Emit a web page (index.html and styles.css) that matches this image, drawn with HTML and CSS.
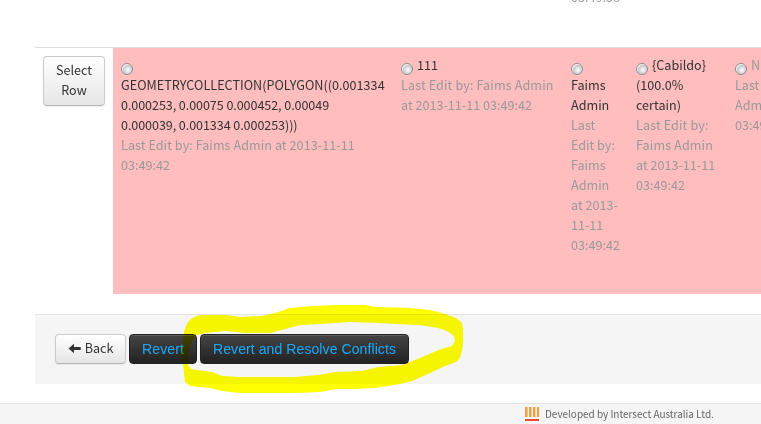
FILE: index.html
```
<!DOCTYPE html>
<html lang="en">
<head>
<meta charset="utf-8">
<title>Resolve Conflicts</title>
<link rel="stylesheet" href="styles.css">
</head>
<body>
<div class="previous"><span class="edit">03:49:38</span></div>
<div class="row">
  <div class="select"><button class="btn btn-row">Select<br>Row</button></div>
  <div class="cell"><i class="radio"></i><br><span class="geo">GEOMETRYCOLLECTION(POLYGON((0.001334</span><br><span class="coords">0.000253, 0.00075 0.000452, 0.00049<br>0.000039, 0.001334 0.000253)))</span><br><span class="edit loose">Last Edit by: Faims Admin at 2013-11-11</span><br><span class="edit">03:49:42</span></div>
  <div class="cell"><i class="radio"></i>111<br><span class="edit looser">Last Edit by: Faims Admin</span><br><span class="edit">at 2013-11-11 03:49:42</span></div>
  <div class="cell"><i class="radio"></i><br>Faims<br>Admin<br><span class="edit">Last<br>Edit by:<br>Faims<br>Admin<br>at 2013-<br>11-11<br>03:49:42</span></div>
  <div class="cell"><i class="radio"></i>{Cabildo}<br>(100.0%<br>certain)<br><span class="edit looser">Last Edit by:<br>Faims Admin</span><br><span class="edit">at 2013-11-11<br>03:49:42</span></div>
  <div class="cell edit"><i class="radio"></i>NULL<br>Last Edit by: Faims<br>Admin at 2013-11-11<br>03:49:42</div>
</div>
<div class="actions">
  <button class="btn btn-back"><svg width="14" height="12" viewBox="0 0 14 12"><path d="M0.5 5.5L6 .7V3.9H12.7V7.1H6V10.3Z" fill="#333"/></svg>Back</button>
  <button class="btn btn-dark btn-revert">Revert</button>
  <button class="btn btn-dark btn-resolve">Revert and Resolve Conflicts</button>
  <svg class="marker" width="761" height="100" viewBox="0 300 761 100"><path fill="#ff0" fill-rule="evenodd" d="M188 322L192 318L200 315H227L240 317L262 316L275 313L290 308L312 306L335 305H365L376 307L410 308L430 310L445 314L456 318L462 323L463 328V345L460 358L456 362L445 366L430 373L412 381L400 384L375 388L355 389H336L320 392L297 393H240L222 391L210 388L190 386L185 382L183 363L181 355L183 345L184 331ZM196 335L190 345L188 355V365L191 369L197 370L212 372L222 376L240 377H295L318 375L335 372L362 371L378 367L402 365L420 358L441 349L452 346L455 341L454 336L447 331L438 328L420 325L395 324L378 323L350 322L320 324L300 325L285 329L270 333H245L225 331L205 333Z"/></svg>
</div>
<div class="footer"><svg width="15" height="15" viewBox="0 0 15 15"><path d="M0 0h2.6v10H0zM4 0h2.6v10H4zM8 0h2.4v10H8zM12 0h2.2v10H12z" fill="#f2a044"/><path d="M0 12h14v2H0z" fill="#e34b35"/></svg><span>Developed by Intersect Australia Ltd.</span></div>
</body>
</html>
```
FILE: styles.css
```
* { box-sizing: border-box; }
body {
  margin: 0;
  width: 761px;
  height: 424px;
  overflow: hidden;
  background: #fff;
  color: #333;
  font: 12.6px/20px "Noto Sans CJK SC", "Noto Sans", sans-serif;
}
.previous { display: flex; height: 47px; padding-left: 571px; }
.previous .edit { margin-top: -13px; height: 20px; }
.row {
  display: grid;
  grid-template-columns: 78px 280px 170px 65px 99px 34px;
  height: 247px;
  margin-left: 35px;
  border-top: 1px solid #ddd;
}
.select { padding: 8px; }
.cell { padding: 7px 8px 8px; background: #ffbdbd; white-space: nowrap; overflow: hidden; }
.edit { color: #999; }
.geo { letter-spacing: .03px; }
.coords { letter-spacing: -.09px; }
.loose { letter-spacing: .06px; }
.looser { letter-spacing: .12px; }
.radio {
  display: inline-block;
  width: 12px;
  height: 12px;
  margin-right: 4px;
  vertical-align: -5px;
  border: 1px solid #8e8f8f;
  border-radius: 50%;
  background: radial-gradient(circle at 60% 60%, #f4f4f4 10%, #c5c8cc 55%, #f4f4f4 65%);
}
.btn {
  display: block;
  margin: 0;
  padding: 3px 0 5px;
  border: 1px solid #ccc;
  border-bottom-color: #b3b3b3;
  border-radius: 4px;
  background: linear-gradient(#fff, #e6e6e6);
  box-shadow: inset 0 1px 0 rgba(255,255,255,.2), 0 1px 2px rgba(0,0,0,.05);
  color: #333;
  font: inherit;
  white-space: nowrap;
}
.btn-row { width: 62px; height: 50px; }
.actions {
  position: relative;
  display: flex;
  gap: 3px;
  height: 70px;
  margin: 20px 0 0 35px;
  padding: 19px 20px;
  border-top: 1px solid #e5e5e5;
  background: #f5f5f5;
}
.btn-back { width: 71px; height: 30px; }
.btn-back svg { margin-right: 3px; vertical-align: -2px; }
.btn-dark {
  height: 30px;
  padding: 4px 0;
  border-color: #222;
  background: linear-gradient(#444, #222);
  box-shadow: inset 0 1px 0 rgba(255,255,255,.15);
  color: #19aaff;
  font: 14px/20px "Liberation Sans", Arial, sans-serif;
  letter-spacing: .09px;
}
.btn-revert { width: 68px; }
.btn-resolve { width: 209px; }
.marker {
  position: absolute;
  left: -35px;
  top: -15px;
  mix-blend-mode: multiply;
  pointer-events: none;
}
.footer {
  display: flex;
  height: 21px;
  margin-top: 19px;
  padding: 3px 0 0 525px;
  border-top: 1px solid #e5e5e5;
  background: #f5f5f5;
  color: #666;
  font-size: 10px;
  line-height: 13px;
}
.footer span { margin-left: 5px; white-space: nowrap; letter-spacing: -.03px; }
```
